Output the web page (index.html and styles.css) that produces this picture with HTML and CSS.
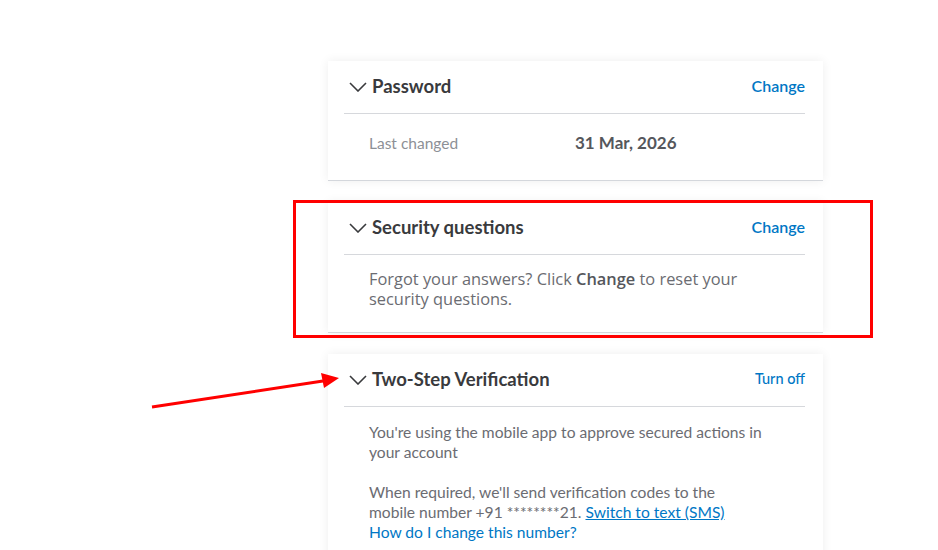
FILE: index.html
```html
<!DOCTYPE html>
<html>
<head>
<meta charset="utf-8">
<link rel="stylesheet" href="styles.css">
</head>
<body>
<div class="page">
  <div class="stack">
    <section class="card">
      <div class="card-head">
        <svg class="chev" viewBox="0 0 18 10" width="18" height="10"><path d="M1 1 L9 9 L17 1" fill="none" stroke="#393a3d" stroke-width="1.6"/></svg>
        <h2 class="title">Password</h2>
        <a class="action">Change</a>
      </div>
      <div class="card-body pw">
        <span class="label">Last changed</span>
        <span class="value">31 Mar, 2026</span>
      </div>
    </section>

    <section class="card">
      <div class="card-head">
        <svg class="chev" viewBox="0 0 18 10" width="18" height="10"><path d="M1 1 L9 9 L17 1" fill="none" stroke="#393a3d" stroke-width="1.6"/></svg>
        <h2 class="title">Security questions</h2>
        <a class="action">Change</a>
      </div>
      <div class="card-body sq">
        <p class="text wide">Forgot your answers? Click <b>Change</b> to reset your security questions.</p>
      </div>
    </section>

    <section class="card">
      <div class="card-head">
        <svg class="chev" viewBox="0 0 18 10" width="18" height="10"><path d="M1 1 L9 9 L17 1" fill="none" stroke="#393a3d" stroke-width="1.6"/></svg>
        <h2 class="title">Two-Step Verification</h2>
        <a class="action small">Turn off</a>
      </div>
      <div class="card-body tsv">
        <p class="text small">You're using the mobile app to approve secured actions in your account</p>
        <p class="text small">When required, we'll send verification codes to the<br>mobile number +91 ********21. <a class="link u">Switch to text (SMS)</a><br><a class="link">How do I change this number?</a></p>
      </div>
    </section>
  </div>

  <div class="highlight"></div>
  <svg class="arrow" width="200" height="40" viewBox="0 0 200 40">
    <line x1="1" y1="37" x2="172" y2="11" stroke="#f00" stroke-width="3"/>
    <polygon points="188,8 170,3 173,18" fill="#f00"/>
  </svg>
</div>
</body>
</html>
```

FILE: styles.css
```css
* { box-sizing: border-box; }
html, body { margin: 0; padding: 0; background: #fff; }
body {
  font-family: "Lato", "Open Sans", sans-serif;
  color: #393a3d;
  width: 938px;
  height: 550px;
  overflow: hidden;
}
.page {
  position: relative;
  height: 550px;
  padding: 61px 0 0 328px;
}
.stack {
  display: flex;
  flex-direction: column;
  gap: 21px;
  width: 495px;
}
.card {
  background: #fff;
  box-shadow: 0 0 10px rgba(0, 0, 0, 0.07);
  border-bottom: 1px solid #d4d7dc;
  padding: 0 18px 0 16px;
}
.card-head {
  display: flex;
  align-items: center;
  height: 53px;
  border-bottom: 1px solid #d6d8dc;
  padding: 0 0 3px 5px;
}
.chev { flex: none; margin-right: 5px; margin-top: 2px; }
.title {
  margin: 0;
  font-size: 18.5px;
  font-weight: 700;
  color: #393a3d;
  flex: 1;
}
.action {
  color: #0077c5;
  font-size: 16px;
  font-weight: 600;
  cursor: pointer;
}
.action.small { font-size: 14.5px; font-weight: 500; }
.card-body { padding-left: 25px; }
.pw {
  display: flex;
  align-items: center;
  padding-top: 19px;
  padding-bottom: 27px;
  line-height: 20px;
}
.label { width: 206px; color: #8d9096; font-size: 15.5px; }
.value { color: #55575c; font-size: 17px; font-weight: 700; }
.sq { padding-top: 14px; padding-bottom: 23px; }
.tsv { padding-top: 15px; padding-bottom: 20px; }
.text {
  margin: 0;
  max-width: 420px;
  line-height: 20px;
  color: #6b6c72;
}
.text.wide {
  font-family: "Open Sans", "Lato", sans-serif;
  font-size: 16.4px;
}
.text b { color: #55575c; font-weight: 600; }
.text.small { font-size: 15.6px; margin-bottom: 20px; }
.text.small:last-child { margin-bottom: 0; }
.link { color: #0077c5; cursor: pointer; }
.link.u { text-decoration: underline; }
.highlight {
  position: absolute;
  left: 293px;
  top: 200px;
  width: 580px;
  height: 138px;
  border: 3px solid #ff0000;
}
.arrow {
  position: absolute;
  left: 151px;
  top: 370px;
}
```
